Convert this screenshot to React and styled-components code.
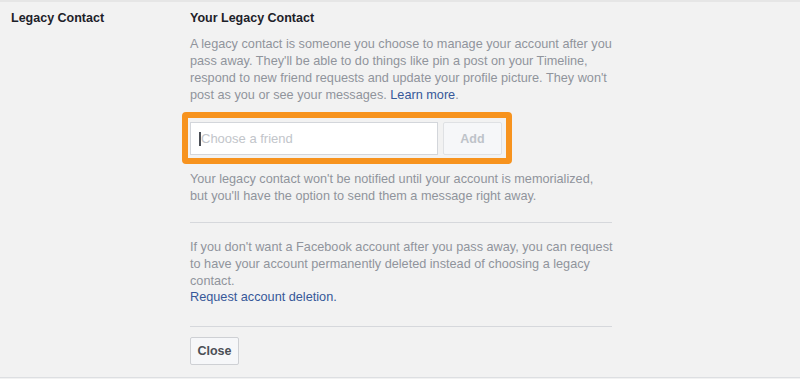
import React from "react";
import styled, { createGlobalStyle } from "styled-components";

const GlobalStyle = createGlobalStyle`
  html, body {
    margin: 0;
    padding: 0;
    background: #f2f2f2;
  }
  body {
    font-family: "Liberation Sans", Arial, Helvetica, sans-serif;
    -webkit-font-smoothing: antialiased;
  }
`;

const Page = styled.div`
  width: 800px;
  height: 379px;
  box-sizing: border-box;
  border-top: 2px solid #e6e6e6;
  background: #f2f2f2;
`;

const Section = styled.div`
  display: grid;
  grid-template-columns: 190px 424px;
  padding: 8px 0 12px;
  border-bottom: 1px solid #dddfe2;
`;

const Label = styled.div`
  padding-left: 11px;
  font-size: 12.5px;
  line-height: 17px;
  font-weight: bold;
  color: #1d2129;
`;

const Content = styled.div`
  display: flex;
  flex-direction: column;
`;

const Heading = styled.div`
  font-size: 12.5px;
  line-height: 17px;
  font-weight: bold;
  color: #1d2129;
`;

const Text = styled.div`
  font-size: 12.7px;
  line-height: 17px;
  color: #90949c;
  margin-top: ${(p) => p.$top || 0}px;
`;

const Link = styled.a`
  color: #365899;
  text-decoration: none;
  cursor: pointer;
`;

const Highlight = styled.div`
  align-self: flex-start;
  display: flex;
  gap: 5px;
  margin: 8px 0 0 -8px;
  padding: 4px 4px 3px 2px;
  border: 6px solid #f7931e;
  border-radius: 4px;
`;

const Field = styled.div`
  position: relative;
  display: flex;
`;

const Input = styled.input`
  width: 248px;
  height: 33px;
  box-sizing: border-box;
  border: 1px solid #d3d6db;
  background: #fff;
  padding: 0 10px;
  font-family: inherit;
  font-size: 13px;
  color: #1d2129;
  outline: none;
  &::placeholder {
    color: #c2c5ca;
  }
`;

const Caret = styled.span`
  position: absolute;
  left: 9px;
  top: 10px;
  width: 2px;
  height: 14px;
  background: #4b4f56;
`;

const Button = styled.button`
  box-sizing: border-box;
  width: ${(p) => p.$w}px;
  height: ${(p) => p.$h}px;
  padding: 0;
  border: 1px solid ${(p) => (p.$disabled ? "#dfe1e4" : "#ced0d4")};
  border-radius: 2px;
  background: #f6f7f9;
  color: ${(p) => (p.$disabled ? "#bec3c9" : "#4b4f56")};
  font-family: inherit;
  font-size: 12.5px;
  font-weight: bold;
  cursor: pointer;
`;

const Divider = styled.div`
  width: 422px;
  height: 1px;
  background: #d6d8dc;
  margin: ${(p) => p.$m};
`;

function App() {
  return (
    <>
      <GlobalStyle />
      <Page>
        <Section>
          <Label>Legacy Contact</Label>
          <Content>
            <Heading>Your Legacy Contact</Heading>
            <Text $top={9}>
              A legacy contact is someone you choose to manage your account after you
              pass away. They'll be able to do things like pin a post on your Timeline,
              respond to new friend requests and update your profile picture. They won't
              post as you or see your messages. <Link>Learn more</Link>.
            </Text>
            <Highlight>
              <Field>
                <Input placeholder="Choose a friend" />
                <Caret />
              </Field>
              <Button $w={59} $h={33} $disabled>
                Add
              </Button>
            </Highlight>
            <Text $top={7}>
              Your legacy contact won't be notified until your account is memorialized,
              but you'll have the option to send them a message right away.
            </Text>
            <Divider $m="17px 0 16px" />
            <Text>
              If you don't want a Facebook account after you pass away, you can request
              to have your account permanently deleted instead of choosing a legacy
              contact.
            </Text>
            <Text $top={-1}>
              <Link>Request account deletion.</Link>
            </Text>
            <Divider $m="20px 0 10px" />
            <Button $w={49} $h={28}>
              Close
            </Button>
          </Content>
        </Section>
      </Page>
    </>
  );
}

export default App;
